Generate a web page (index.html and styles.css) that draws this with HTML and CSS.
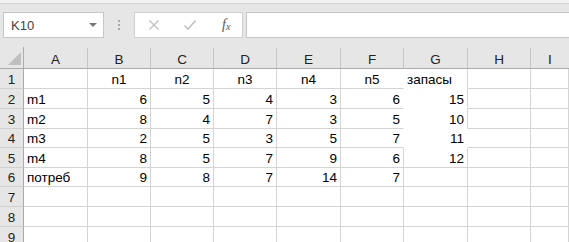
FILE: index.html
```html
<!DOCTYPE html>
<html lang="ru">

<head>
  <meta charset="UTF-8">
  <title>Sheet</title>
  <link rel="stylesheet" href="styles.css">
</head>

<body>

  <!-- Top strip (ribbon edge) -->
  <div class="ribbon-edge"></div>

  <!-- Name box and formula bar -->
  <div class="formula-row">
    <div class="name-box">
      <span>K10</span>
      <span class="drop"></span>
    </div>
    <div class="grip">
      <i></i><i></i><i></i>
    </div>
    <div class="fx-buttons">
      <svg class="fx-icon" width="12" height="12" viewBox="0 0 12 12">
        <path d="M1.5 1.5 L10.5 10.5 M10.5 1.5 L1.5 10.5" stroke="#c2c2c2" stroke-width="1.4" fill="none" />
      </svg>
      <svg class="fx-icon" width="14" height="12" viewBox="0 0 14 12">
        <path d="M1.5 6.5 L5 10 L12.5 1.5" stroke="#c2c2c2" stroke-width="1.6" fill="none" />
      </svg>
      <span class="fx">f<sub>x</sub></span>
    </div>
    <div class="formula-input"></div>
  </div>

  <!-- Worksheet grid -->
  <div class="sheet">
    <div class="corner"><span class="select-all"></span></div>
    <div class="hd">A</div>
    <div class="hd">B</div>
    <div class="hd">C</div>
    <div class="hd">D</div>
    <div class="hd">E</div>
    <div class="hd">F</div>
    <div class="hd">G</div>
    <div class="hd">H</div>
    <div class="hd last">I</div>

    <div class="rh">1</div>
    <div class="c"></div>
    <div class="c ctr">n1</div>
    <div class="c ctr">n2</div>
    <div class="c ctr">n3</div>
    <div class="c ctr">n4</div>
    <div class="c ctr no-right">n5</div>
    <div class="c no-bottom">запасы</div>
    <div class="c"></div>
    <div class="c"></div>

    <div class="rh">2</div>
    <div class="c">m1</div>
    <div class="c num">6</div>
    <div class="c num">5</div>
    <div class="c num">4</div>
    <div class="c num">3</div>
    <div class="c num no-right">6</div>
    <div class="c num no-bottom">15</div>
    <div class="c"></div>
    <div class="c"></div>

    <div class="rh">3</div>
    <div class="c">m2</div>
    <div class="c num">8</div>
    <div class="c num">4</div>
    <div class="c num">7</div>
    <div class="c num">3</div>
    <div class="c num no-right">5</div>
    <div class="c num no-bottom">10</div>
    <div class="c"></div>
    <div class="c"></div>

    <div class="rh">4</div>
    <div class="c">m3</div>
    <div class="c num">2</div>
    <div class="c num">5</div>
    <div class="c num">3</div>
    <div class="c num">5</div>
    <div class="c num no-right">7</div>
    <div class="c num no-bottom no-right">11</div>
    <div class="c"></div>
    <div class="c"></div>

    <div class="rh">5</div>
    <div class="c">m4</div>
    <div class="c num">8</div>
    <div class="c num">5</div>
    <div class="c num">7</div>
    <div class="c num">9</div>
    <div class="c num">6</div>
    <div class="c num">12</div>
    <div class="c"></div>
    <div class="c"></div>

    <div class="rh">6</div>
    <div class="c">потреб</div>
    <div class="c num">9</div>
    <div class="c num">8</div>
    <div class="c num">7</div>
    <div class="c num">14</div>
    <div class="c num">7</div>
    <div class="c"></div>
    <div class="c"></div>
    <div class="c"></div>

    <div class="rh">7</div>
    <div class="c"></div><div class="c"></div><div class="c"></div><div class="c"></div>
    <div class="c"></div><div class="c"></div><div class="c"></div><div class="c"></div><div class="c"></div>

    <div class="rh">8</div>
    <div class="c"></div><div class="c"></div><div class="c"></div><div class="c"></div>
    <div class="c"></div><div class="c"></div><div class="c"></div><div class="c"></div><div class="c"></div>

    <div class="rh">9</div>
    <div class="c"></div><div class="c"></div><div class="c"></div><div class="c"></div>
    <div class="c"></div><div class="c"></div><div class="c"></div><div class="c"></div><div class="c"></div>
  </div>

</body>

</html>
```

FILE: styles.css
```css
* {
  margin: 0;
  padding: 0;
  box-sizing: border-box;
}

body {
  width: 569px;
  height: 242px;
  overflow: hidden;
  background: #e6e6e6;
  font-family: 'Liberation Sans', Arial, sans-serif;
  font-size: 13.5px;
  color: #000;
}

/* Thin strip left over from the ribbon */
.ribbon-edge {
  height: 4px;
  background: #f3f3f3;
  border-bottom: 1px solid #d2d2d2;
}

/* Name box + formula bar row */
.formula-row {
  display: flex;
  align-items: stretch;
  height: 26px;
  margin-top: 8px;
  padding-left: 3px;
}

.name-box {
  width: 101px;
  background: #fff;
  border: 1px solid #c6c6c6;
  display: flex;
  align-items: center;
  justify-content: space-between;
  padding: 0 6px 0 7px;
  color: #444;
  font-size: 13px;
}

.drop {
  width: 0;
  height: 0;
  border-left: 4px solid transparent;
  border-right: 4px solid transparent;
  border-top: 4px solid #777;
}

.grip {
  width: 30px;
  display: flex;
  flex-direction: column;
  align-items: center;
  justify-content: center;
  gap: 2px;
}

.grip i {
  width: 2px;
  height: 2px;
  background: #a8a8a8;
}

.fx-buttons {
  width: 109px;
  background: #fff;
  border: 1px solid #d0d0d0;
  display: flex;
  align-items: center;
  padding-left: 13px;
  gap: 23px;
}

.fx {
  font-family: 'Liberation Serif', serif;
  font-style: italic;
  font-size: 14px;
  color: #555;
  margin-left: 2px;
}

.fx sub {
  font-size: 10px;
  vertical-align: -1px;
}

.formula-input {
  flex: 1;
  margin-left: 3px;
  background: #fff;
  border: 1px solid #c6c6c6;
  border-right: none;
}

/* Worksheet */
.sheet {
  display: grid;
  margin-top: 9px;
  grid-template-columns: 24px 64px 63px 63px 63px 64px 63px 64px 63px 1fr;
  grid-template-rows: 22px 20px 20px 20px 19px 20px 19px 20px 20px 20px;
  background: #fff;
}

.corner {
  background: #e6e6e6;
  border-right: 1px solid #ababab;
  border-bottom: 1px solid #ababab;
  position: relative;
}

.select-all {
  position: absolute;
  right: 2px;
  bottom: 3px;
  width: 0;
  height: 0;
  border-left: 13px solid transparent;
  border-bottom: 13px solid #bfbfbf;
}

.hd {
  background: #e6e6e6;
  border-bottom: 1px solid #ababab;
  border-right: 1px solid #c4c4c4;
  border-top: 2px solid #e6e6e6;
  display: flex;
  align-items: center;
  justify-content: center;
  color: #222;
  padding-top: 2px;
}

.hd.last {
  border-right: none;
}

.rh {
  background: #e6e6e6;
  border-right: 1px solid #ababab;
  border-bottom: 1px solid #d0d0d0;
  display: flex;
  align-items: center;
  justify-content: center;
  color: #222;
  padding-top: 1px;
}

.c {
  border-right: 1px solid #d4d4d4;
  border-bottom: 1px solid #d4d4d4;
  display: flex;
  align-items: center;
  padding: 1px 3px 0 3px;
  white-space: nowrap;
}

.c.num {
  justify-content: flex-end;
}

.c.ctr {
  justify-content: center;
}

/* white-filled cells hide the grid lines */
.c.no-right {
  border-right-color: #fff;
}

.c.no-bottom {
  border-bottom-color: #fff;
}
```
